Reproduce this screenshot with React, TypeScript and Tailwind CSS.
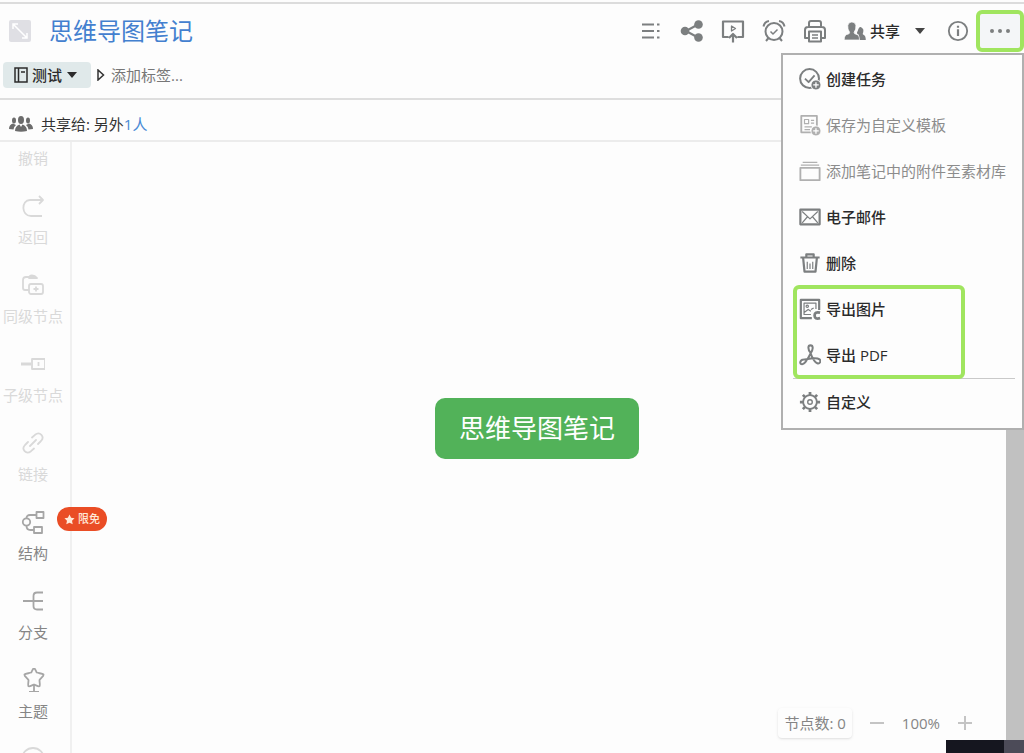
import type { ReactNode } from "react";
import clsx from "clsx";

type IconProps = { className?: string; children: ReactNode };

function Icon({ className = "size-6", children }: IconProps) {
  return (
    <svg
      viewBox="0 0 24 24"
      className={clsx("shrink-0", className)}
      fill="none"
      stroke="currentColor"
      strokeWidth="2"
      strokeLinejoin="round"
      aria-hidden="true"
    >
      {children}
    </svg>
  );
}

function Caret() {
  return (
    <svg viewBox="0 0 10 6" className="h-[6px] w-[10px] shrink-0" fill="currentColor" aria-hidden="true">
      <path d="M0 0h10L5 6z" />
    </svg>
  );
}

const toolbar = [
  {
    label: "大纲",
    icon: <path d="M3 5.5h12M3 12h12M3 18.5h12M18 5.5h2.5M18 12h2.5M18 18.5h2.5" strokeWidth="1.8" />,
  },
  {
    label: "分享",
    icon: (
      <>
        <path d="M18 5.5 6 12l12 6.5" />
        <g fill="currentColor" stroke="none">
          <circle cx="18.5" cy="5.5" r="4.3" />
          <circle cx="5" cy="12" r="4.3" />
          <circle cx="18.5" cy="18.5" r="4.3" />
        </g>
      </>
    ),
  },
  {
    label: "演示",
    icon: (
      <>
        <path d="M7.500 18H2V2.500h20V18h-5.500M12 23.500V15M8 19l4-4 4 4" strokeWidth="2.200" />
        <path d="M10.500 7v5l4-2.500z" strokeWidth="1.300" />
      </>
    ),
  },
  {
    label: "提醒",
    icon: (
      <>
        <circle cx="12" cy="12.5" r="8.5" />
        <path d="m8.500 12.500 2.500 2.500 4.500-4.500" strokeWidth="1.500" />
        <path d="M1.500 7.500C2 4.500 4 2.500 7 2M22.500 7.500C22 4.500 20 2.500 17 2M6.500 19l-2.500 3M17.500 19l2.500 3" />
      </>
    ),
  },
  {
    label: "打印",
    icon: (
      <>
        <path d="M6 8V4q0-2 2-2h8q2 0 2 2v4M6 19H2v-8q0-3 3-3h14q3 0 3 3v8h-4" />
        <path d="M6 12.500h12V22.500H6z" />
        <path d="M9 16h6M9 19h6" strokeWidth="1.500" />
      </>
    ),
  },
];

const badgePlus = (
  <>
    <circle cx="18.500" cy="18.500" r="5.500" fill="currentColor" stroke="white" strokeWidth="1" />
    <path d="M18.500 15.500v6M15.500 18.500h6" stroke="white" strokeWidth="1.400" />
  </>
);

const menuTop = [
  {
    label: "创建任务",
    disabled: false,
    icon: (
      <>
        <circle cx="11.500" cy="11.500" r="10.300" strokeWidth="2.200" />
        <path d="m6.500 11.500 4 4 6.500-7.500" />
        {badgePlus}
      </>
    ),
  },
  {
    label: "保存为自定义模板",
    disabled: true,
    icon: (
      <>
        <path d="M2.500 2h17v18h-17z" />
        <path d="M6 6h4.500v4.500H6zM13 7h3.500M13 10h3.500M6 14h8M6 17h6" strokeWidth="1.300" />
        {badgePlus}
      </>
    ),
  },
  {
    label: "添加笔记中的附件至素材库",
    disabled: true,
    icon: (
      <>
        <path d="M1.500 8.500h21V22h-21z" />
        <path d="M2 5.500h20M4 2.500h16" strokeWidth="1.300" />
      </>
    ),
  },
  {
    label: "电子邮件",
    disabled: false,
    icon: (
      <>
        <path d="M1.500 4h21v16h-21z" strokeWidth="2.400" />
        <path d="m3.500 6 8.500 8 8.500-8M3.500 18.500l5.500-6.500M20.500 18.500 15 12" strokeWidth="1.300" />
      </>
    ),
  },
  {
    label: "删除",
    disabled: false,
    icon: (
      <>
        <path d="M1.500 6h21M8 6V2.500h8V6M4.500 6.500l1.500 15h12l1.500-15" strokeWidth="2.400" />
        <path d="M9 10.500v8M12 12.500v6M15 10.500v8" strokeWidth="1.300" />
      </>
    ),
  },
];

const menuExport = [
  {
    label: "导出图片",
    disabled: false,
    icon: (
      <>
        <path d="M14 22H2V2h20v11" strokeWidth="2.400" />
        <path d="M13 18H5.500V5.500h13V12M6 15.500l4-3 3 2M16 11l-3 1.500" strokeWidth="1.300" />
        <circle cx="9" cy="9" r="1.300" strokeWidth="1.300" />
        <path d="M23 16q-6-1.500-6 3t6 3" strokeWidth="3" />
      </>
    ),
  },
  {
    label: "导出 PDF",
    disabled: false,
    icon: (
      <path
        d="M12.500 9.500C9.500 6 9.500 1.500 12.500 1.500s3.500 4 0 9C10 15.500 7 22 3.500 22c-3.500 0-2.500-4.500 1.500-5 4-.6 8-1.500 12-1.500 5 0 7.500 2 6 4.500s-4.500 1-6.500-2-3-5-4-8.500z"
        strokeWidth="2.200"
      />
    ),
  },
];

const menuBottom = [
  {
    label: "自定义",
    disabled: false,
    icon: (
      <>
        <circle cx="12" cy="12" r="7.500" />
        <circle cx="12" cy="12" r="2.500" strokeWidth="1.500" />
        <path
          d="M12 1v3.500M12 19.500V23M1 12h3.500M19.500 12H23M4.200 4.200l2.500 2.500M17.300 17.300l2.500 2.500M4.200 19.800l2.500-2.500M17.300 6.700l2.500-2.500"
          strokeWidth="3"
        />
      </>
    ),
  },
];

const tools = [
  { label: "撤销", faded: true, icon: <path d="M8 3 3 7l5 4M3 7h11a7 7 0 0 1 0 14H4" /> },
  {
    label: "返回",
    faded: true,
    icon: <path d="m18 2 4 4-4 4M22 6H9c-9 0-9 16 1 16h11" />,
  },
  {
    label: "同级节点",
    faded: true,
    icon: (
      <>
        <path d="M8 17H4q-2 0-2-2V7q0-3 3-3h4" />
        <path d="M8 5q0-2.500 3-2.500t5 2.500z" fill="currentColor" />
        <rect x="8" y="11" width="14" height="10" rx="2" />
        <path d="M15 13.500v5M12.500 16h5" />
      </>
    ),
  },
  {
    label: "子级节点",
    faded: true,
    icon: (
      <>
        <path d="M0 12h10" strokeWidth="3" />
        <path d="M11 7h13v10H11zM17.500 10v4" />
      </>
    ),
  },
  {
    label: "链接",
    faded: true,
    icon: (
      <path
        d="M11 6.500 14 3.800c5-4 10 2 6 6.200l-3 3M13 17.500l-3 2.700c-5 4-10-2-6-6.200l3-3M9 15l6-6"
        strokeLinecap="round"
      />
    ),
  },
  {
    label: "结构",
    faded: false,
    icon: (
      <>
        <circle cx="5.500" cy="12" r="3.700" />
        <path d="M15.500 2h7v6h-7zM13 17h8v6h-8zM5.500 8.300Q5.500 5 9 5h6.500M5.500 15.700Q5.500 20 9.500 20H13" />
      </>
    ),
  },
  {
    label: "分支",
    faded: false,
    icon: <path d="M2 12h20M22 3.500h-6q-3.500 0-3.500 3.500v10q0 3.500 3.500 3.500h6" />,
  },
  {
    label: "主题",
    faded: false,
    icon: (
      <path d="M13 0c.8 0 1.500 2.500 2.700 4.500 2.300.8 5.800 1 6.800 2 .8 1-2.500 3.500-4 5.500 0 2.500.8 5.500 0 6.200-.8.800-3.500-1-5.500-1.700-2 .7-4.700 2.500-5.500 1.700-.8-.7 0-3.700 0-6.200-1.500-2-4.800-4.500-4-5.500 1-1 4.500-1.200 6.800-2C11.500 2.500 12.200 0 13 0zM13 16.500V24M8 24h10" />
    ),
  },
];

type MenuEntry = { label: string; disabled: boolean; icon: ReactNode };

function MenuItem({ label, disabled, icon }: MenuEntry) {
  return (
    <li>
      <button
        disabled={disabled}
        className={clsx(
          "flex h-[46px] w-full items-center gap-[5px] pl-4 whitespace-nowrap",
          disabled ? "text-[#8c8c8c]" : "font-medium text-[#2b2b2b]"
        )}
      >
        <Icon className={clsx("size-[22px]", disabled ? "text-[#b0b0b0]" : "text-[#7c7f80]")}>{icon}</Icon>
        {label}
      </button>
    </li>
  );
}

function MoreMenu() {
  return (
    <div className="absolute top-[43px] right-0 z-20 w-[243px] border-2 border-[#b0b0b0] bg-[#fdfdfd] pt-px pb-[3px]">
      <ul>
        {menuTop.map((item) => (
          <MenuItem key={item.label} {...item} />
        ))}
      </ul>
      <div className="relative">
        <div className="pointer-events-none absolute -inset-y-px left-[10px] z-10 w-[172px] rounded-md border-4 border-[#a0e55f]" />
        <ul>
          {menuExport.map((item) => (
            <MenuItem key={item.label} {...item} />
          ))}
        </ul>
      </div>
      <hr className="mr-[7px] ml-[10px] border-[#c9c9c9]" />
      <ul>
        {menuBottom.map((item) => (
          <MenuItem key={item.label} {...item} />
        ))}
      </ul>
    </div>
  );
}

function Header() {
  return (
    <header className="border-t-2 border-b-2 border-t-[#dcdcdc] border-b-[#dedede]">
      <div className="flex items-center pt-[6px] pl-[9px]">
        <button aria-label="全屏" className="mr-[18px] text-white">
          <svg viewBox="0 0 22 22" className="size-[22px]" fill="none" stroke="currentColor" strokeWidth="1.5">
            <rect width="22" height="22" rx="2" fill="#dfdfe4" stroke="none" />
            <path d="m4 4 14 14M4 9V4h5M18 13v5h-5" />
          </svg>
        </button>
        <h1 className="text-2xl leading-10 text-[#4380cf]">思维导图笔记</h1>

        <div className="ml-auto flex items-center text-[#7c7f80]">
          {toolbar.map((tool) => (
            <button key={tool.label} aria-label={tool.label} className="flex w-[41px] justify-center">
              <Icon>{tool.icon}</Icon>
            </button>
          ))}
          <button className="flex w-[105px] items-center pl-[9px]">
            <svg viewBox="0 0 24 20" className="h-[18px] w-[22px]" fill="currentColor" aria-hidden="true">
              <path d="M14 20v-4q3 0 2-2-3-1-1-4 2-7 5-3 2 1 1 5-1 2 0 2 3 1 3 6z" />
              <path
                d="M0 20q0-6 4-6.500 2 0 2-2Q3.500 8 4 4q.5-4 4.500-4T13 4q.5 4-2 7.500 0 2 2 2 4 .5 4 6.500z"
                stroke="#fdfdfd"
                strokeWidth=".8"
              />
            </svg>
            <span className="ml-1 font-medium text-[#2b2b2b]">共享</span>
            <span className="ml-[15px] text-[#444]">
              <Caret />
            </span>
          </button>
          <button aria-label="信息" className="flex w-9 justify-center">
            <Icon className="size-[22px]">
              <circle cx="12" cy="12" r="10" />
              <path d="M12 10v7.500M12 6.200v2.200" strokeWidth="2.400" />
            </Icon>
          </button>
          <div className="relative">
            <button
              aria-label="更多"
              aria-expanded="true"
              className="flex h-[42px] w-12 items-center justify-center gap-1 rounded-md border-4 border-[#a0e55f] bg-[#f4f6f8]"
            >
              <span className="size-1 rounded-full bg-[#7c7f80]" />
              <span className="size-1 rounded-full bg-[#7c7f80]" />
              <span className="size-1 rounded-full bg-[#7c7f80]" />
            </button>
            <MoreMenu />
          </div>
        </div>
      </div>

      <div className="flex items-center gap-[6px] pt-[10px] pb-[10px] pl-[3px]">
        <button className="flex h-[26px] w-[88px] items-center rounded-sm bg-[#e0e9ea] pl-[11px] text-[#2b2b2b]">
          <svg viewBox="0 0 14 16" className="h-4 w-[14px]" fill="none" stroke="currentColor" strokeWidth="1.5">
            <path d="M1 1h12v14H1zM4.500 1v14M7 5h4" />
          </svg>
          <span className="mr-[5px] ml-1 font-medium">测试</span>
          <Caret />
        </button>
        <svg viewBox="0 0 8 12" className="h-3 w-2" fill="none" stroke="#333" strokeWidth="1.5" aria-hidden="true">
          <path d="M1 1v10l5.500-5z" />
        </svg>
        <button className="text-[#777]">添加标签...</button>
      </div>
    </header>
  );
}

function ShareBar() {
  return (
    <div className="flex h-[42px] items-center border-b-2 border-[#ececec] pt-2 pl-[9px] text-[#333]">
      <svg viewBox="0 0 24 16" className="h-4 w-6 text-[#6c6c6c]" fill="currentColor" aria-hidden="true">
        <ellipse cx="12" cy="4" rx="3" ry="4" />
        <path d="M6 15q0-5 4.500-6.500L12 11l1.500-2.500Q18 10 18 15q-6 1.500-12 0z" />
        <ellipse cx="5" cy="4.500" rx="2" ry="3" />
        <ellipse cx="19" cy="4.500" rx="2" ry="3" />
        <path d="M0 13q0-4.500 4-5.500l3 1.500q-2.500 2-2.500 4.500zM24 13q0-4.500-4-5.500L17 9q2.500 2 2.500 4.500z" />
      </svg>
      <p className="ml-2">
        共享给: 另外
        <a href="#members" className="text-[#4a8bd6]">
          1人
        </a>
      </p>
    </div>
  );
}

function Sidebar() {
  return (
    <aside className="w-[72px] shrink-0 overflow-hidden border-r-2 border-[#f0f0f0]">
      <ul className="-mt-[27px] flex flex-col gap-[25px]">
        {tools.map((tool) => (
          <li key={tool.label}>
            <button
              className={clsx(
                "flex w-full flex-col items-center gap-2 pr-1",
                tool.faded ? "text-[#d9d9d9]" : "text-[#858585]"
              )}
            >
              <Icon className={clsx("size-6", !tool.faded && "text-[#a6a6a6]")}>
                <g strokeWidth="1.800">{tool.icon}</g>
              </Icon>
              <span className="leading-[22px] whitespace-nowrap">{tool.label}</span>
            </button>
          </li>
        ))}
        <li>
          <button aria-label="更多工具" className="flex w-full justify-center pr-1 text-[#d9d9d9]">
            <Icon>
              <circle cx="12" cy="12" r="11" strokeWidth="1.800" />
            </Icon>
          </button>
        </li>
      </ul>
    </aside>
  );
}

function Canvas() {
  return (
    <main className="relative flex min-w-0 flex-1 items-center justify-center pr-1 pb-[38px]">
      <div className="rounded-[10px] bg-[#52b259] px-6 py-3 text-[26px] leading-[37px] text-white">思维导图笔记</div>

      {/* badge of the 结构 tool, hangs over the sidebar edge */}
      <span className="absolute top-[365px] -left-[15px] flex h-6 w-[50px] items-center justify-center gap-[3px] rounded-full bg-[#ea4d25] text-[11px] font-medium text-[#ffe9d8]">
        <svg viewBox="0 0 24 24" className="size-[11px]" fill="currentColor" aria-hidden="true">
          <path d="m12 1 3.500 7.200 7.500 1-5.500 5.400L19 22.500 12 19l-7 3.500 1.500-7.900L1 9.200l7.500-1z" />
        </svg>
        限免
      </span>

      <div className="absolute right-[34px] bottom-[15px] flex items-center text-[#858585]">
        <span className="rounded-sm px-[6px] py-1 leading-[22px] shadow-sm">节点数: 0</span>
        <button aria-label="缩小" className="ml-[18px] text-[#c4c4c4]">
          <svg viewBox="0 0 14 14" className="size-[14px]" stroke="currentColor" strokeWidth="2">
            <path d="M0 7h14" />
          </svg>
        </button>
        <span className="mx-[18px]">100%</span>
        <button aria-label="放大" className="text-[#c4c4c4]">
          <svg viewBox="0 0 14 14" className="size-[14px]" stroke="currentColor" strokeWidth="2">
            <path d="M0 7h14M7 0v14" />
          </svg>
        </button>
      </div>
    </main>
  );
}

export default function App() {
  return (
    <div className="relative flex h-screen flex-col overflow-hidden bg-[#fdfdfd] pt-[2px] font-['Open_Sans','Noto_Sans_CJK_SC',sans-serif] text-[15px] leading-6">
      <Header />
      <ShareBar />
      <div className="flex min-h-0 flex-1">
        <Sidebar />
        <Canvas />
        <div className="w-[18px] shrink-0 bg-[#c1c1c1]" />
      </div>
      <div className="absolute right-0 bottom-0 flex h-[13px] w-[78px] bg-[#15161f]">
        <div className="ml-auto w-5 bg-[#4c4b58]" />
      </div>
    </div>
  );
}
